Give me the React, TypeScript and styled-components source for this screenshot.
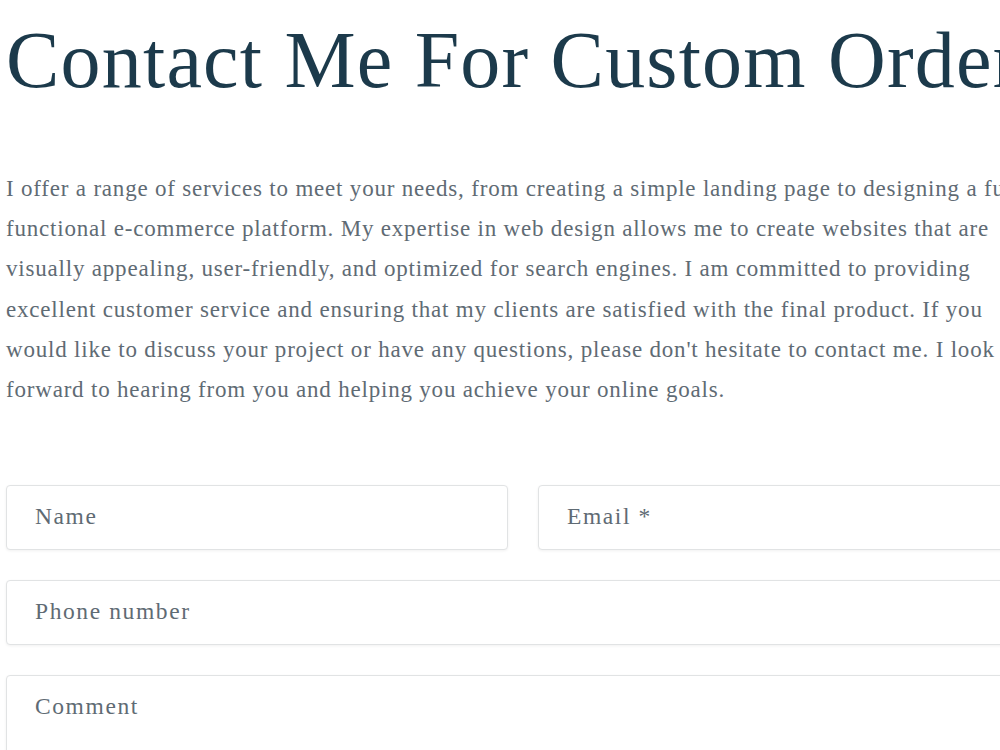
import React from "react";
import styled, { createGlobalStyle } from "styled-components";

const GlobalStyle = createGlobalStyle`
  html, body {
    margin: 0;
    padding: 0;
    background: #ffffff;
    overflow: hidden;
  }
  body {
    font-family: "Liberation Serif", "DejaVu Serif", serif;
  }
`;

const Page = styled.main`
  width: 1034px;
  padding: 12px 0 0 6px;
`;

const Title = styled.h1`
  margin: 0;
  font-family: "Liberation Serif", serif;
  font-weight: 400;
  font-size: 80px;
  line-height: 1.2;
  color: #1c3a4b;
  white-space: nowrap;
  letter-spacing: 1.2px;
`;

const Intro = styled.p`
  margin: 61px 0 0;
  font-size: 23px;
  line-height: 40.2px;
  letter-spacing: 0.8px;
  color: #5f6b74;
  white-space: nowrap;
`;

const Form = styled.form`
  margin-top: 75px;
  display: flex;
  flex-direction: column;
  gap: 30px;
`;

const Row = styled.div`
  display: grid;
  grid-template-columns: 1fr 1fr;
  gap: 30px;
`;

const Field = styled.label<{ $tall?: boolean }>`
  display: block;
  box-sizing: border-box;
  height: ${(p) => (p.$tall ? "140px" : "65px")};
  padding: 17px 28px 0;
  border: 1px solid #e1e3e4;
  border-radius: 4px;
  box-shadow: 0 1px 3px rgba(0, 0, 0, 0.06);
  background: #fff;
  font-size: 23.5px;
  letter-spacing: 1.6px;
  color: #5f6b74;
`;

export default function App() {
  return (
    <>
      <GlobalStyle />
      <Page>
        <Title>Contact Me For Custom Order</Title>
        <Intro>
          I offer a range of services to meet your needs, from creating a simple landing page to designing a fully
          <br />
          functional e-commerce platform. My expertise in web design allows me to create websites that are
          <br />
          visually appealing, user-friendly, and optimized for search engines. I am committed to providing
          <br />
          excellent customer service and ensuring that my clients are satisfied with the final product. If you
          <br />
          would like to discuss your project or have any questions, please don't hesitate to contact me. I look
          <br />
          forward to hearing from you and helping you achieve your online goals.
        </Intro>
        <Form>
          <Row>
            <Field>Name</Field>
            <Field>Email *</Field>
          </Row>
          <Field>Phone number</Field>
          <Field $tall>Comment</Field>
        </Form>
      </Page>
    </>
  );
}
